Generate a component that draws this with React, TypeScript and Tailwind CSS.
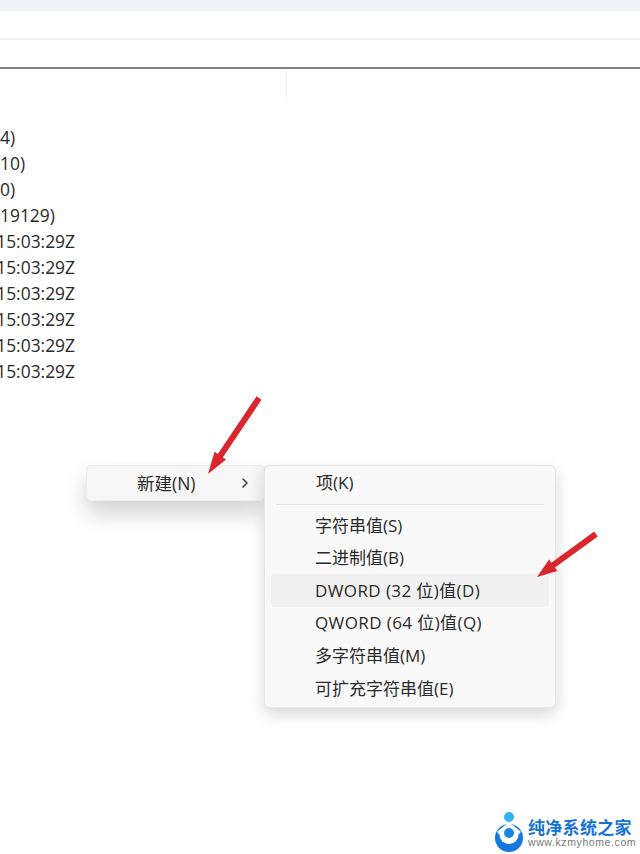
import { ChevronRight } from "lucide-react"

const VALUE_ROWS = [
  "4)",
  "10)",
  "0)",
  "19129)",
  "15:03:29Z",
  "15:03:29Z",
  "15:03:29Z",
  "15:03:29Z",
  "15:03:29Z",
  "15:03:29Z",
]

const SUB_ITEMS = [
  { label: "字符串值(S)" },
  { label: "二进制值(B)" },
  { label: "DWORD (32 位)值(D)", active: true, wide: true },
  { label: "QWORD (64 位)值(Q)", wide: true },
  { label: "多字符串值(M)" },
  { label: "可扩充字符串值(E)" },
]

const FONT = "font-['Open_Sans','Noto_Sans_CJK_SC',sans-serif]"

function Logo() {
  return (
    <div className="absolute left-[495px] top-[811px] flex items-start gap-[3px]">
      <svg width="30" height="43" viewBox="0 0 30 43">
        <circle cx="14" cy="6" r="5" fill="#2fb4f0" />
        <circle cx="14" cy="27" r="14" fill="#1478dc" />
        <ellipse cx="14" cy="24" rx="9.5" ry="9" fill="#ffffff" />
        <path d="M3 22 L14 13 L25 22" fill="none" stroke="#ffffff" strokeWidth="3" />
        <circle cx="14" cy="22" r="5" fill="#1a86e0" />
      </svg>
      <div className="flex flex-col pt-[7px]">
        <span className="text-[17px] leading-[18px] font-bold tracking-[0.3px] text-[#1673d2] font-['Noto_Sans_CJK_SC',sans-serif]">
          纯净系统之家
        </span>
        <span className="mt-[1px] text-[10.5px] leading-[11px] tracking-[0.6px] text-[#777777] font-['Liberation_Sans',sans-serif]">
          www.kzmyhome.com
        </span>
      </div>
    </div>
  )
}

export default function App() {
  return (
    <div className={`relative h-[854px] w-[640px] overflow-hidden bg-white ${FONT}`}>
      <div className="h-[11px] bg-[#f0f2f8]" />
      <div className="h-[27px]" />
      <div className="h-[2px] bg-[#f0f0f0]" />
      <div className="h-[27px]" />
      <div className="h-[2px] bg-[#7f8280]" />
      <div className="ml-[286px] h-[29px] w-[1px] bg-[#f0f0f0]" />

      <div className="mt-[26px] flex w-[75px] flex-col items-end overflow-hidden">
        {VALUE_ROWS.map((row, i) => (
          <div key={i} className={`h-[26px] text-[17.4px] leading-[26px] whitespace-nowrap text-[#2a2a2a] ${i < 4 ? "w-[75px]" : ""}`}>
            {i < 4 ? <span className="block text-left">{row}</span> : row}
          </div>
        ))}
      </div>

      {/* context menu */}
      <div className="absolute left-[86px] top-[465px] flex h-[36px] w-[179px] items-center rounded-[5px] border border-[#ececec] bg-[#f6f6f6] pl-[50px] pr-[11px] text-[17.5px] text-[#2a2a2a] shadow-[0_12px_22px_rgba(0,0,0,0.18)]">
        <span className="flex-1">新建(N)</span>
        <ChevronRight size={16} strokeWidth={2} className="text-[#333333]" />
      </div>

      {/* submenu */}
      <div className="absolute left-[264px] top-[465px] flex h-[243px] w-[292px] flex-col rounded-[6px] border border-[#e6e6e6] bg-[#f9f9f9] px-[6px] pt-[1px] text-[17px] text-[#2a2a2a] shadow-[0_6px_16px_rgba(0,0,0,0.16)]">
        <div className="flex h-[32px] items-center pl-[45px]">项(K)</div>
        <div className="mx-[5px] mt-[5px] mb-[4px] h-[1px] bg-[#e3e3e3]" />
        {SUB_ITEMS.map((item) => (
          <div
            key={item.label}
            className={`flex h-[32.6px] items-center rounded-[4px] pl-[44px] ${item.active ? "bg-[#f0f0f0]" : ""} ${item.wide ? "tracking-[0.4px]" : ""}`}
          >
            {item.label}
          </div>
        ))}
      </div>

      <svg className="absolute left-[200px] top-[392px] h-[90px] w-[70px]" viewBox="0 0 70 90">
        <polygon points="56.5,4.3 61.5,7.7 22.8,65.4 26.1,67.6 8,82 14.5,59.8 17.8,62" fill="#d9272e" />
      </svg>
      <svg className="absolute left-[533px] top-[525px] h-[60px] w-[70px]" viewBox="0 0 70 60">
        <polygon points="61.2,6.6 64.8,11.4 22,42.6 24.3,45.9 4,52 16.1,34.5 18.4,37.8" fill="#d9272e" />
      </svg>

      <Logo />
    </div>
  )
}
